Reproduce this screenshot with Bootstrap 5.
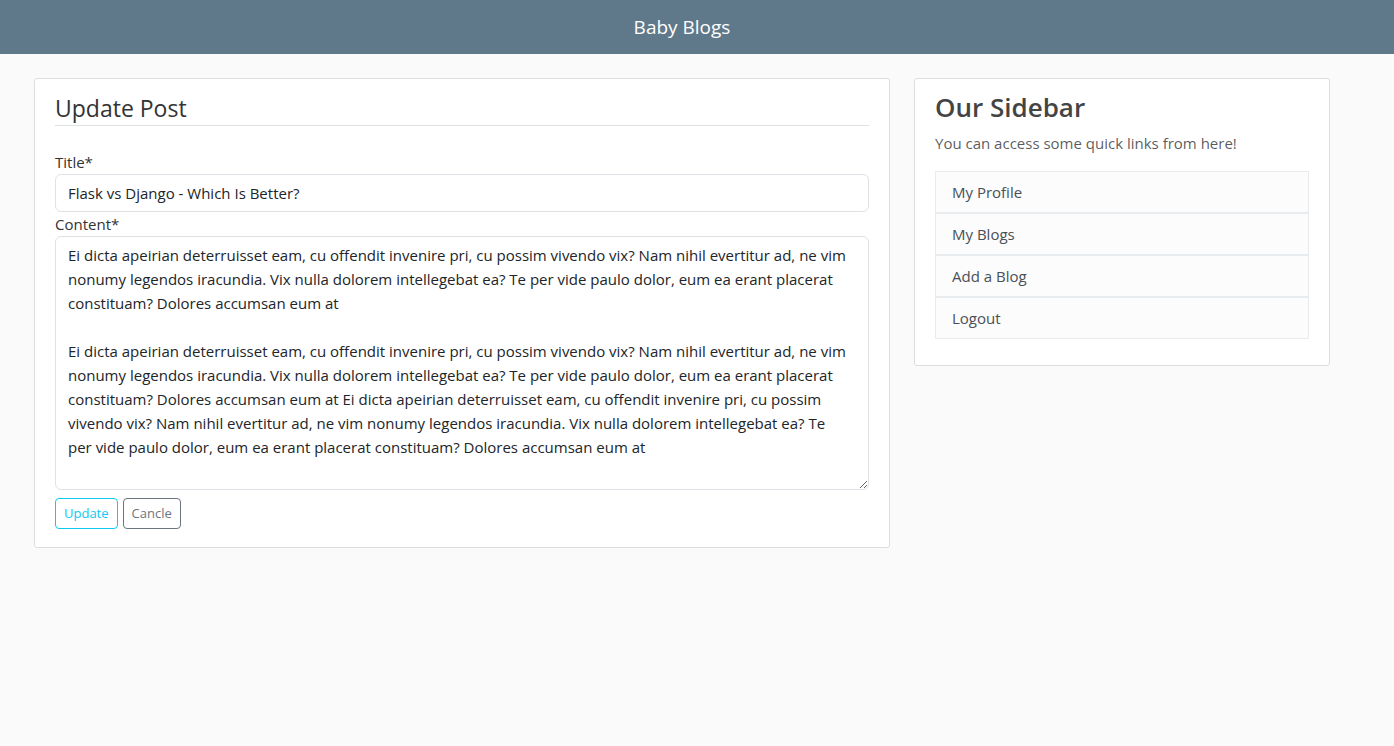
<!DOCTYPE html>
<html lang="en">
<head>
<meta charset="utf-8">
<meta name="viewport" content="width=device-width, initial-scale=1">
<title>Baby Blogs</title>
<link href="https://cdn.jsdelivr.net/npm/bootstrap@5.3.0/dist/css/bootstrap.min.css" rel="stylesheet">
<style>
body { background: #fafafa; color: #333; font-family: "Segoe UI", "Open Sans", "Noto Sans", sans-serif; font-size: 15px; line-height: 24px; }
.site-header { background: #5f788a; }
.site-header .navbar-brand { font-size: 19px; line-height: 28px; margin-right: 30px; color: #fff; }
.page-wrap { padding: 0 64px 0 34px; }
.content-section { background: #fff; border: 1px solid #ddd; border-radius: 3px; padding: 10px 20px; }
.form-title { font-size: 23px; line-height: 34px; padding-top: 2px; }
.form-control { font-size: 15px; line-height: 24px; }
.post-body { height: 254px; padding-right: 18px; }
.form-actions { gap: 5px; }
.form-actions .btn { font-size: 13px; line-height: 21px; }
.side-title { font-size: 26px; line-height: 36px; font-weight: 600; color: #444; margin-bottom: 6px; }
.side-links .list-group-item { line-height: 24px; color: #495057; border: 1px solid #e9ecef; background: #fcfcfc; }
</style>
</head>
<body>
<header class="site-header">
<nav class="navbar navbar-dark py-2"><div class="container justify-content-center"><a class="navbar-brand" href="#">Baby Blogs</a></div></nav>
</header>
<main class="page-wrap mt-4">
<div class="row">
<div class="col-md-8">
<div class="content-section">
<form>
<fieldset>
<legend class="form-title border-bottom mb-4">Update Post</legend>
<label for="title">Title*</label>
<input id="title" class="form-control" type="text" value="Flask vs Django - Which Is Better?">
<label for="content">Content*</label>
<textarea id="content" class="form-control post-body">Ei dicta apeirian deterruisset eam, cu offendit invenire pri, cu possim vivendo vix? Nam nihil evertitur ad, ne vim nonumy legendos iracundia. Vix nulla dolorem intellegebat ea? Te per vide paulo dolor, eum ea erant placerat constituam? Dolores accumsan eum at

Ei dicta apeirian deterruisset eam, cu offendit invenire pri, cu possim vivendo vix? Nam nihil evertitur ad, ne vim nonumy legendos iracundia. Vix nulla dolorem intellegebat ea? Te per vide paulo dolor, eum ea erant placerat constituam? Dolores accumsan eum at Ei dicta apeirian deterruisset eam, cu offendit invenire pri, cu possim vivendo vix? Nam nihil evertitur ad, ne vim nonumy legendos iracundia. Vix nulla dolorem intellegebat ea? Te per vide paulo dolor, eum ea erant placerat constituam? Dolores accumsan eum at</textarea>
</fieldset>
<div class="form-actions d-flex my-2">
<button class="btn btn-outline-info btn-sm" type="submit">Update</button>
<a class="btn btn-outline-secondary btn-sm" href="#">Cancle</a>
</div>
</form>
</div>
</div>
<div class="col-md-4">
<aside class="content-section">
<h3 class="side-title">Our Sidebar</h3>
<p class="text-muted mb-3">You can access some quick links from here!</p>
<div class="side-links mb-3">
<a class="list-group-item px-3 py-2" href="#">My Profile</a>
<a class="list-group-item px-3 py-2" href="#">My Blogs</a>
<a class="list-group-item px-3 py-2" href="#">Add a Blog</a>
<a class="list-group-item px-3 py-2" href="#">Logout</a>
</div>
</aside>
</div>
</div>
</main>
<script src="https://cdn.jsdelivr.net/npm/bootstrap@5.3.0/dist/js/bootstrap.bundle.min.js"></script>
</body>
</html>
